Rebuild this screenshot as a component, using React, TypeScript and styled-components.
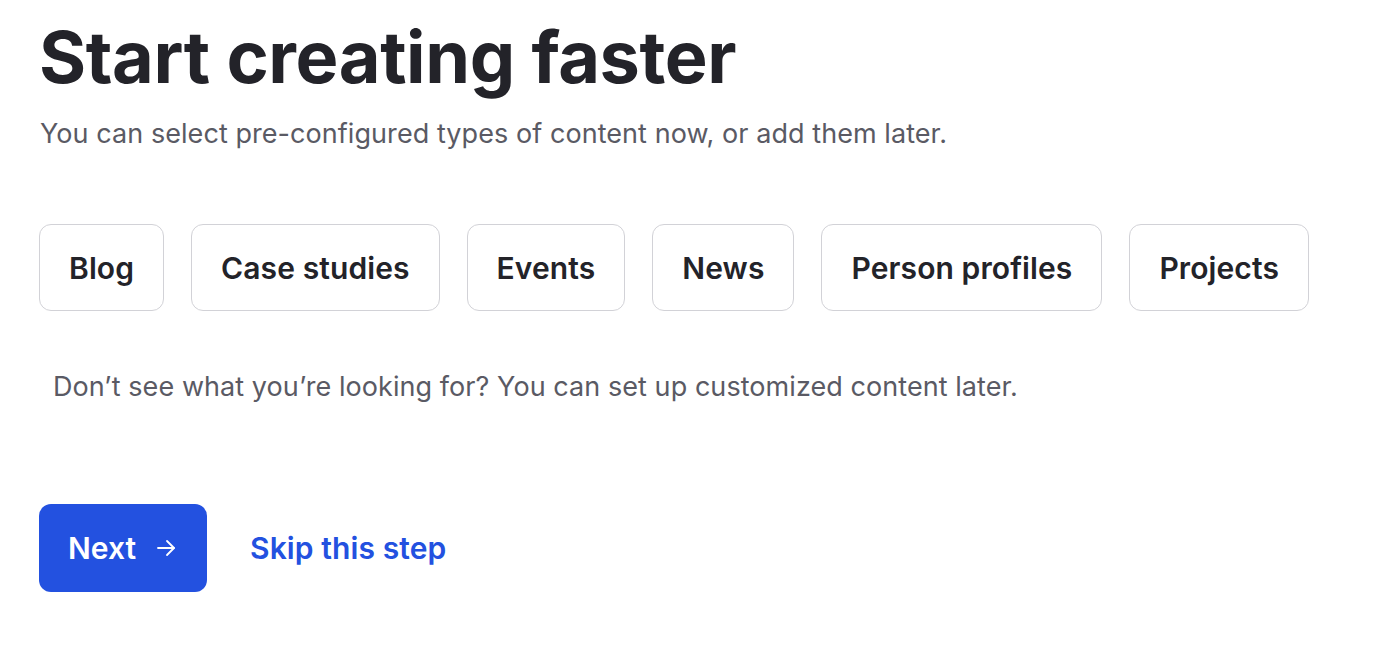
import * as React from 'react'
import styled, { createGlobalStyle } from 'styled-components'

const GlobalStyle = createGlobalStyle`
  body {
    margin: 0;
    background: #fff;
    font-family: Inter, 'Noto Sans', sans-serif;
  }
`

const Page = styled.main`
  padding: 14px 39px 0 39px;
`

const Title = styled.h1`
  font-size: 72px;
  font-weight: 700;
  letter-spacing: -0.4px;
  line-height: 1.2;
  color: #232329;
  margin: 0;
`

const Subtitle = styled.p`
  font-size: 27px;
  letter-spacing: 0.06px;
  color: #5a5a64;
  margin: 15px 0 0 1px;
  line-height: 1.4;
`

const ChipRow = styled.div`
  display: flex;
  gap: 27px;
  margin-top: 71px;
`

const Chip = styled.button`
  height: 87px;
  padding: 0 29px;
  border: 1.5px solid #d2d2d7;
  border-radius: 12px;
  background: #fff;
  font-family: inherit;
  font-size: 30px;
  font-weight: 600;
  letter-spacing: 0.1px;
  color: #232329;
  cursor: pointer;
`

const Note = styled.p`
  font-size: 27px;
  letter-spacing: 0.06px;
  color: #5a5a64;
  margin: 57px 0 0 14px;
  line-height: 1.4;
`

const Actions = styled.div`
  display: flex;
  align-items: center;
  gap: 43px;
  margin-top: 98px;
`

const NextButton = styled.button`
  display: flex;
  align-items: center;
  gap: 18px;
  height: 88px;
  padding: 0 29px;
  border: none;
  border-radius: 12px;
  background: #2351e0;
  color: #fff;
  font-family: inherit;
  font-size: 30px;
  font-weight: 600;
  cursor: pointer;
`

const SkipLink = styled.a`
  font-size: 30px;
  font-weight: 600;
  letter-spacing: 0.1px;
  color: #2351e0;
  text-decoration: none;
  cursor: pointer;
`

const types = ['Blog', 'Case studies', 'Events', 'News', 'Person profiles', 'Projects']

const App: React.FunctionComponent = () => (
  <>
    <GlobalStyle />
    <Page>
      <Title>Start creating faster</Title>
      <Subtitle>You can select pre-configured types of content now, or add them later.</Subtitle>
      <ChipRow>
        {types.map((t) => (
          <Chip key={t}>{t}</Chip>
        ))}
      </ChipRow>
      <Note>Don’t see what you’re looking for? You can set up customized content later.</Note>
      <Actions>
        <NextButton>
          Next
          <svg width='24' height='24' viewBox='0 0 24 24' fill='none' stroke='currentColor' strokeWidth='1.8' strokeLinecap='round' strokeLinejoin='round'>
            <path d='M4 12h16' />
            <path d='m13 5 7 7-7 7' />
          </svg>
        </NextButton>
        <SkipLink>Skip this step</SkipLink>
      </Actions>
    </Page>
  </>
)

export default App
